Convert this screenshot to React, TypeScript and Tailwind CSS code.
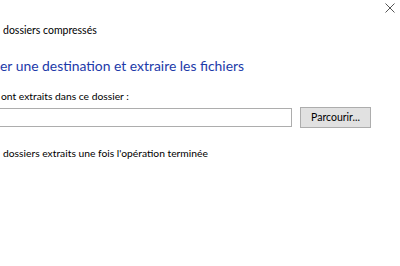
import React from "react";

export default function App() {
  return (
    <div className="relative w-[400px] h-[266px] overflow-hidden bg-white text-black font-['Lato',sans-serif]">
      <button className="absolute right-[0px] top-[1px] w-[20px] h-[14px] flex items-center justify-center">
        <svg width="10" height="10" viewBox="0 0 10 10">
          <path d="M0.5 0.5 L9.5 9.5 M9.5 0.5 L0.5 9.5" stroke="#555" strokeWidth="1" />
        </svg>
      </button>
      <div className="flex flex-col">
        <div className="pt-[23px] pl-[3px] text-[10.5px] leading-[15px]">dossiers compressés</div>
        <div className="pt-[18px] pl-[0px] text-[13.9px] leading-[20px] text-[#1c3aa9]">er une destination et extraire les fichiers</div>
        <div className="pt-[13px] pl-[1px] text-[10.3px] leading-[15px]">ont extraits dans ce dossier :</div>
        <div className="pt-[3px] flex items-center gap-[8px]">
          <div className="w-[292px] h-[19px] border border-l-0 border-[#adadad] bg-white" />
          <button className="w-[71px] h-[21px] bg-[#e1e1e1] border border-[#adadad] text-[10.5px] leading-[15px]">Parcourir...</button>
        </div>
        <div className="pt-[18px] pl-[3px] text-[10.3px] leading-[15px]">dossiers extraits une fois l'opération terminée</div>
      </div>
    </div>
  );
}
